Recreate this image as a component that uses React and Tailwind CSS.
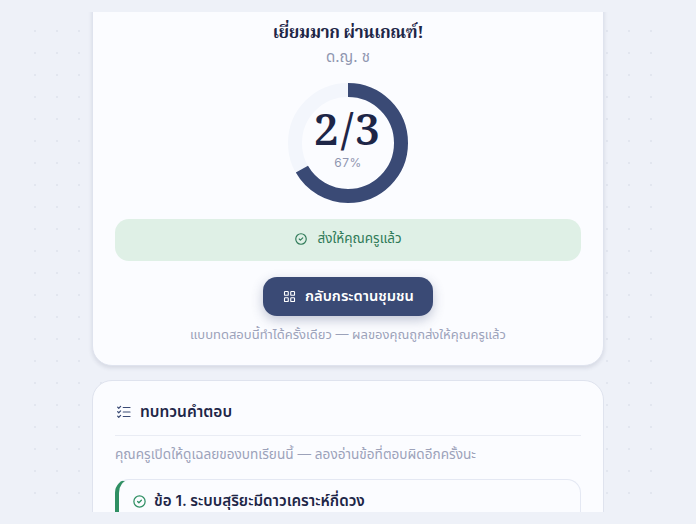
import React from 'react';
import { TbCircleCheck, TbLayoutGrid, TbListCheck } from 'react-icons/tb';

const Donut = () => (
  <div className="relative mt-[16px] h-[120px] w-[120px]">
    <svg width="120" height="120" viewBox="0 0 120 120" className="-rotate-90">
      <circle cx="60" cy="60" r="53" fill="none" stroke="#f3f6fc" strokeWidth="14" />
      <circle cx="60" cy="60" r="53" fill="none" stroke="#3a4a75" strokeWidth="14" strokeDasharray="222 333" />
    </svg>
    <div className="absolute inset-0 flex flex-col items-center justify-center pb-[2px]">
      <span className="font-['Noto_Serif_Thai',serif] text-[44px] leading-[38px] font-semibold tracking-[2px] text-[#1e2647]">2/3</span>
      <span className="mt-[3px] text-[12px] leading-[15px] tracking-[0.5px] text-[#8f96b0]">67%</span>
    </div>
  </div>
);

export default function App() {
  return (
    <div className="h-[524px] w-[696px] overflow-hidden bg-[#eef1f8] py-3 font-['Inter','Noto_Sans_Thai',sans-serif]">
      <div className="mx-6 h-[500px] overflow-hidden bg-[radial-gradient(circle,#e2e6ef_1px,transparent_1.5px)] bg-[size:22px_22px] bg-[position:0_8px]">
        <div className="mx-auto -mt-[20px] flex w-[512px] flex-col gap-[14px]">
          <section className="flex flex-col items-center rounded-[20px] border border-[#dfe3ee] bg-[#fbfcff] px-[22px] pt-[27px] pb-[21px] shadow-[0_2px_4px_rgba(30,38,71,0.12)]">
            <h1 className="font-['Noto_Serif_Thai',serif] text-[17px] leading-[28px] font-bold tracking-[-0.4px] text-[#1e2647]">เยี่ยมมาก ผ่านเกณฑ์!</h1>
            <p className="-mt-px text-[15px] leading-[20px] text-[#8f96b0]">ด.ญ. ช</p>
            <Donut />
            <div className="mt-4 flex h-[42px] w-full items-center justify-center gap-[9px] rounded-[14px] bg-[#dff0e6] pb-[3px] text-[13.5px] text-[#2f7a58]">
              <TbCircleCheck size={14} />
              <span>ส่งให้คุณครูแล้ว</span>
            </div>
            <button className="mt-4 flex h-[39px] w-[170px] items-center justify-center gap-[8px] rounded-[14px] bg-[#3a4a75] text-[14.7px] font-semibold text-white shadow-[0_4px_12px_rgba(58,74,117,0.3)]">
              <TbLayoutGrid size={15} strokeWidth={1.8} />
              <span>กลับกระดานชุมชน</span>
            </button>
            <p className="mt-[8px] text-[13px] leading-[20px] text-[#9ca2ba]">แบบทดสอบนี้ทำได้ครั้งเดียว — ผลของคุณถูกส่งให้คุณครูแล้ว</p>
          </section>
          <section className="rounded-[20px] border border-[#dfe3ee] bg-[#fbfcff] px-[22px] pt-[20px]">
            <div className="flex items-center gap-[7px] border-b border-[#e9ecf4] pb-[12px]">
              <TbListCheck size={18} strokeWidth={1.6} className="text-[#3a4a75]" />
              <h2 className="text-[15.5px] leading-[22px] font-semibold text-[#1e2647]">ทบทวนคำตอบ</h2>
            </div>
            <p className="mt-[8px] text-[13.6px] leading-[20px] text-[#9ca2ba]">คุณครูเปิดให้ดูเฉลยของบทเรียนนี้ — ลองอ่านข้อที่ตอบผิดอีกครั้งนะ</p>
            <div className="mt-[15px] flex h-[60px] items-start gap-[7px] rounded-[14px] border border-l-4 border-[#e4e8f3] border-l-[#2f8f63] pt-[11px] pl-[13px]">
              <TbCircleCheck size={15} className="mt-[3px] text-[#2f8f63]" />
              <span className="text-[15.2px] leading-[20px] font-semibold text-[#1e2647]">ข้อ 1. ระบบสุริยะมีดาวเคราะห์กี่ดวง</span>
            </div>
          </section>
        </div>
      </div>
    </div>
  );
}
